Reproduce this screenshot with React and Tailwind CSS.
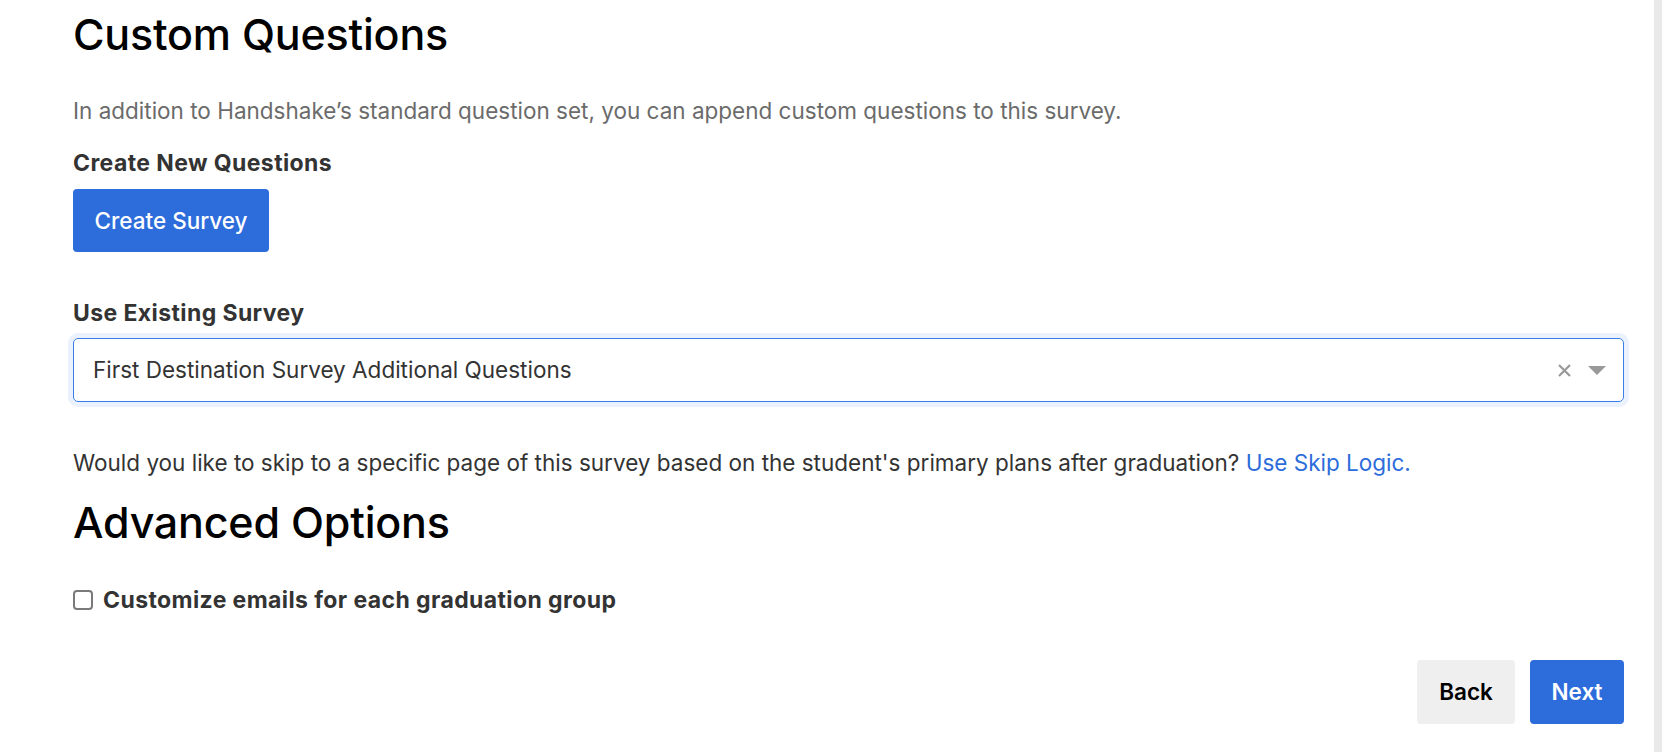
import React, { useState } from 'react';

const App = () => {
    const [customize, setCustomize] = useState(false);

    return (
        <div className="flex h-screen w-full bg-white" style={{ fontFamily: 'Inter, "Noto Sans", sans-serif' }}>
            <div className="flex-1 flex flex-col pl-[73px] pr-[30px] pt-[8px]">
                <h1 className="text-[43px] leading-[52px] font-medium tracking-[-0.2px] text-black">Custom Questions</h1>

                <p className="mt-[37px] text-[22.5px] leading-[28px] text-[#6b6b6b]">
                    In addition to Handshake’s standard question set, you can append custom questions to this survey.
                </p>

                <div className="mt-[24px] text-[23px] leading-[28px] font-bold tracking-[0.4px] text-[#333]">Create New Questions</div>

                <div className="mt-[12px]">
                    <button className="h-[63px] w-[196px] rounded-[4px] bg-[#2d6cdb] text-[22.5px] font-medium text-white">
                        Create Survey
                    </button>
                </div>

                <div className="mt-[47px] text-[23px] leading-[28px] font-bold tracking-[0.4px] text-[#333]">Use Existing Survey</div>

                {/* select with focus ring */}
                <div className="mt-[11px] flex h-[64px] items-center rounded-[5px] border border-[#3a7ee8] pl-[19px] pr-[17px] shadow-[0_0_0_5px_#ebf2fd]">
                    <span className="flex-1 text-[22.5px] text-[#333]">First Destination Survey Additional Questions</span>
                    <svg width="15" height="15" viewBox="0 0 15 15" className="mr-[16px]">
                        <path d="M2 2 L13 13 M13 2 L2 13" stroke="#999" strokeWidth="2.2" />
                    </svg>
                    <svg width="18" height="9" viewBox="0 0 18 9">
                        <path d="M0 0 L18 0 L9 9 Z" fill="#999" />
                    </svg>
                </div>

                <p className="mt-[47px] text-[22.5px] leading-[28px] text-[#333]">
                    Would you like to skip to a specific page of this survey based on the student's primary plans after graduation?{' '}
                    <a href="#" className="text-[#2d6cdb]">Use Skip Logic.</a>
                </p>

                <h2 className="mt-[19px] text-[43px] leading-[52px] font-medium tracking-[-0.2px] text-black">Advanced Options</h2>

                <label className="mt-[38px] flex h-[28px] items-center gap-[10px]">
                    <input
                        type="checkbox"
                        checked={customize}
                        onChange={(e) => setCustomize(e.target.checked)}
                        className="h-[20px] w-[20px] appearance-none rounded-[4px] border-2 border-[#7a7a7a] bg-white"
                    />
                    <span className="text-[23px] leading-[28px] font-bold tracking-[0.4px] text-[#333]">Customize emails for each graduation group</span>
                </label>

                <div className="mt-[46px] flex justify-end gap-[15px]">
                    <button className="h-[64px] w-[98px] rounded-[4px] bg-[#efefef] text-[22.5px] font-semibold text-black">Back</button>
                    <button className="h-[64px] w-[94px] rounded-[4px] bg-[#2d6cdb] text-[22.5px] font-semibold text-white">Next</button>
                </div>
            </div>
            <div className="w-[8px] h-full bg-[#e9e9e9]" />
        </div>
    );
};

export default App;
